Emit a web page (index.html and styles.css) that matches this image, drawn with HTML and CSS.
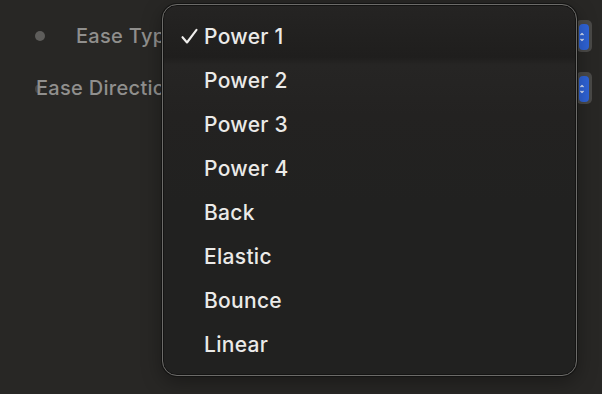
FILE: index.html
```html
<!DOCTYPE html>
<html>
<head>
<meta charset="utf-8">
<link rel="stylesheet" href="styles.css">
</head>
<body>
<div class="panel">
  <div class="row row-type">
    <span class="dot"></span>
    <span class="label">Ease Type</span>
    <span class="stepper"><span class="stepper-inner"><svg width="4" height="14" viewBox="0 0 4 14"><path d="M0.5 5 L2 3.5 L3.5 5 M0.5 9 L2 10.5 L3.5 9" fill="none" stroke="#e6ecfa" stroke-width="1.2"/></svg></span></span>
  </div>
  <div class="row row-dir">
    <span class="dot dot-under"></span>
    <span class="label">Ease Direction</span>
    <span class="stepper"><span class="stepper-inner"><svg width="4" height="14" viewBox="0 0 4 14"><path d="M0.5 5 L2 3.5 L3.5 5 M0.5 9 L2 10.5 L3.5 9" fill="none" stroke="#e6ecfa" stroke-width="1.2"/></svg></span></span>
  </div>
</div>
<div class="menu">
  <div class="item selected"><span class="check"><svg width="17" height="17" viewBox="0 0 17 17"><path d="M1.5 9.2 L6 14.5 L15.5 1.8" fill="none" stroke="#efeeec" stroke-width="2.1" stroke-linecap="round" stroke-linejoin="round"/></svg></span>Power 1</div>
  <div class="item"><span class="check"></span>Power 2</div>
  <div class="item"><span class="check"></span>Power 3</div>
  <div class="item"><span class="check"></span>Power 4</div>
  <div class="item"><span class="check"></span>Back</div>
  <div class="item"><span class="check"></span>Elastic</div>
  <div class="item"><span class="check"></span>Bounce</div>
  <div class="item"><span class="check"></span>Linear</div>
</div>
</body>
</html>
```
FILE: styles.css
```css
html, body {
  margin: 0;
  padding: 0;
  width: 602px;
  height: 394px;
  overflow: hidden;
  background: #282725;
  font-family: Inter, "Noto Sans", sans-serif;
}
.panel {
  display: flex;
  flex-direction: column;
  padding-top: 20px;
  gap: 20px;
}
.row {
  position: relative;
  display: flex;
  align-items: center;
  height: 32px;
}
.dot {
  width: 10px;
  height: 10px;
  border-radius: 50%;
  background: #5e5d5b;
  margin-left: 35px;
}
.row-type .label {
  margin-left: 31px;
}
.dot-under {
  position: absolute;
  left: 0;
  top: 13px;
  width: 6px;
  height: 8px;
  margin-left: 35px;
  opacity: 0.6;
}
.row-dir .label {
  margin-left: 36px;
  position: relative;
}
.label {
  color: #908f8d;
  font-size: 20px;
  font-weight: 500;
  letter-spacing: 0.3px;
}
.stepper {
  margin-left: auto;
  margin-right: 10px;
  width: 16px;
  height: 32px;
  box-sizing: border-box;
  border-radius: 5px;
  background: #4a4947;
  padding: 4px 3px 2px 3px;
  display: flex;
}
.stepper-inner {
  flex: 1;
  background: #2f63d6;
  border-radius: 4px;
  display: flex;
  align-items: center;
  padding-left: 1px;
}
.stepper-inner svg {
  display: block;
}
.menu {
  position: absolute;
  left: 162px;
  top: 4px;
  width: 415px;
  height: 372px;
  box-sizing: border-box;
  border: 1px solid #6c6b69;
  box-shadow: 0 0 0 1px #141413, inset 0 0 0 1px #141413, 0 6px 20px rgba(0,0,0,0.35);
  border-radius: 15px;
  background: linear-gradient(#252423 0px, #1f1e1d 52px, #262524 60px, #232221 110px, #212120 200px);
  padding-top: 9px;
}
.item {
  display: flex;
  align-items: center;
  height: 44px;
  color: #ebeae8;
  font-size: 21px;
  font-weight: 500;
  letter-spacing: 0.3px;
}
.check {
  width: 23px;
  margin-left: 18px;
  display: flex;
  align-items: center;
}
.check svg {
  display: block;
}
```
